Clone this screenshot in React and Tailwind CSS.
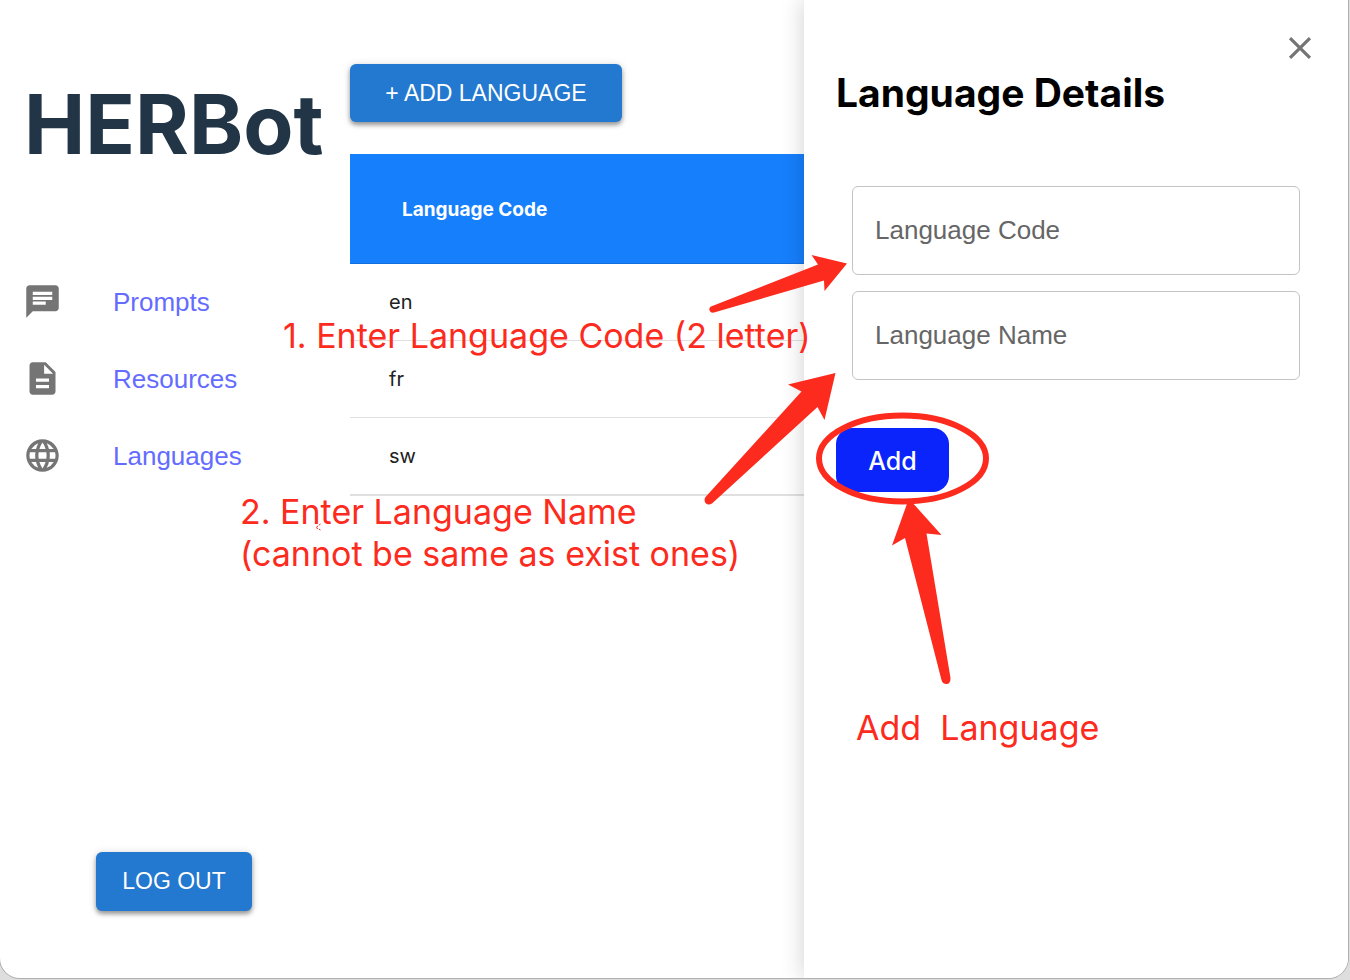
import { MdChat, MdClose, MdDescription, MdLanguage } from "react-icons/md";

const navItems = [
  { label: "Prompts", Icon: MdChat },
  { label: "Resources", Icon: MdDescription },
  { label: "Languages", Icon: MdLanguage },
];

const languageCodes = ["en", "fr", "sw"];

const raisedButton =
  "rounded-md bg-[#2378d0] font-['Liberation_Sans',sans-serif] text-[23px] text-white uppercase shadow-[0_3px_4px_rgba(0,0,0,0.35),0_1px_8px_rgba(0,0,0,0.15)]";

function Sidebar() {
  return (
    <aside className="flex w-[350px] shrink-0 flex-col pb-[67px]">
      <h1 className="pt-[75px] pl-[24px] text-[82px] leading-[100px] font-bold text-[#223547]">
        HERBot
      </h1>
      <nav className="mt-[88px] flex flex-col">
        {navItems.map(({ label, Icon }) => (
          <a
            key={label}
            href={"#" + label.toLowerCase()}
            className="flex h-[77px] items-center gap-[51px] pl-[23px] font-['Liberation_Sans',sans-serif] text-[26px] leading-[40px] text-[#646cff]"
          >
            <Icon className="size-[39px] text-[#757575]" />
            {label}
          </a>
        ))}
      </nav>
      <button
        type="button"
        className={raisedButton + " mt-auto ml-24 h-[59px] w-[156px] self-start"}
      >
        Log out
      </button>
    </aside>
  );
}

function LanguageTable() {
  return (
    <main className="min-w-0 flex-1 pt-16">
      <button type="button" className={raisedButton + " h-[58px] w-[272px]"}>
        + Add language
      </button>
      <table className="mt-8 w-full border-collapse text-left">
        <thead>
          <tr className="h-[109px] border-b border-[#126fe0] bg-[#167ffc]">
            <th className="pt-1 pl-[52px] text-[19px] font-bold text-white">Language Code</th>
          </tr>
        </thead>
        <tbody>
          {languageCodes.map((code) => (
            <tr key={code} className="h-[77px] border-b border-[#e0e0e0] last:h-[78px] last:border-b-2">
              <td className="pl-[39px] text-xl text-[#212121]">{code}</td>
            </tr>
          ))}
        </tbody>
      </table>
    </main>
  );
}

function TextField({ id, label }) {
  return (
    <div className="grid h-[89px] items-center rounded-md border border-[#c4c4c4] font-['Liberation_Sans',sans-serif] text-[26px]">
      <input
        id={id}
        type="text"
        placeholder=" "
        className="peer col-start-1 row-start-1 h-full w-full rounded-md bg-transparent px-[22px] outline-none"
      />
      <label
        htmlFor={id}
        className="pointer-events-none col-start-1 row-start-1 px-[22px] text-[#666666] peer-[:not(:placeholder-shown)]:invisible"
      >
        {label}
      </label>
    </div>
  );
}

function LanguageDrawer() {
  return (
    <section
      aria-labelledby="drawer-title"
      className="absolute inset-y-0 right-0 w-[544px] bg-white px-[29px] shadow-[0_0_22px_rgba(0,0,0,0.19)]"
    >
      <div className="flex justify-end pt-[29px]">
        <button type="button" aria-label="Close" className="text-[#757575]">
          <MdClose className="size-[38px]" />
        </button>
      </div>
      <div className="px-[3px]">
        <h2
          id="drawer-title"
          className="mt-[2px] text-[39px] leading-[48px] font-bold text-black"
        >
          Language Details
        </h2>
        <form onSubmit={(event) => event.preventDefault()}>
          <div className="mt-[69px] flex flex-col gap-4 px-4">
            <TextField id="language-code" label="Language Code" />
            <TextField id="language-name" label="Language Name" />
          </div>
          <button
            type="submit"
            className="mt-12 h-16 w-[113px] rounded-2xl bg-[#0b24fb] pt-[3px] text-[25px] font-medium text-white"
          >
            Add
          </button>
        </form>
      </div>
    </section>
  );
}

function Annotations() {
  return (
    <div className="pointer-events-none absolute inset-0 text-[34px] leading-[42px] whitespace-pre text-[#fc2b1e]">
      <svg
        aria-hidden="true"
        width="1350"
        height="980"
        viewBox="0 0 1350 980"
        fill="#fc2b1e"
        className="absolute top-0 left-0"
      >
        <path d="M711 306.500L818 264.500L811.500 255L847 263.500L824.500 291L824 280.500L714 312.500C710 313.500 707.500 308.500 711 306.500Z" />
        <path d="M705.500 497L801.500 391.500L788 384.500L835.500 373L824.500 420L817.500 407L712 503.500C707 507 702.500 501.500 705.500 497Z" />
        <path d="M908 501H911L941.500 535L926.500 533.500L950.500 678Q950.500 684 946.500 684Q942.500 684 941.500 680L905 538L892 545.500Z" />
        <ellipse cx="902.500" cy="458.500" rx="83.500" ry="43" fill="none" stroke="#fc2b1e" strokeWidth="6" />
        <path d="M320.500 524L316 527.500L320.500 530" fill="none" stroke="#fc2b1e" strokeWidth="1" strokeDasharray="2 1" />
      </svg>
      <p className="absolute top-[315px] left-[283px]">1. Enter Language Code (2 letter)</p>
      <p className="absolute top-[491px] left-[240px]">
        {"2. Enter Language Name\n(cannot be same as exist ones)"}
      </p>
      <p className="absolute top-[707px] left-[856px]">{"Add  Language"}</p>
    </div>
  );
}

export default function App() {
  return (
    <div className="relative flex min-h-screen flex-col bg-[#dedede] pr-[2px] pb-[2px] font-[Inter,sans-serif]">
      <div className="relative flex flex-1 overflow-hidden rounded-b-[20px] bg-white shadow-[0_0_0_1px_#b0b0b0]">
        <Sidebar />
        <LanguageTable />
        <LanguageDrawer />
      </div>
      <Annotations />
    </div>
  );
}
